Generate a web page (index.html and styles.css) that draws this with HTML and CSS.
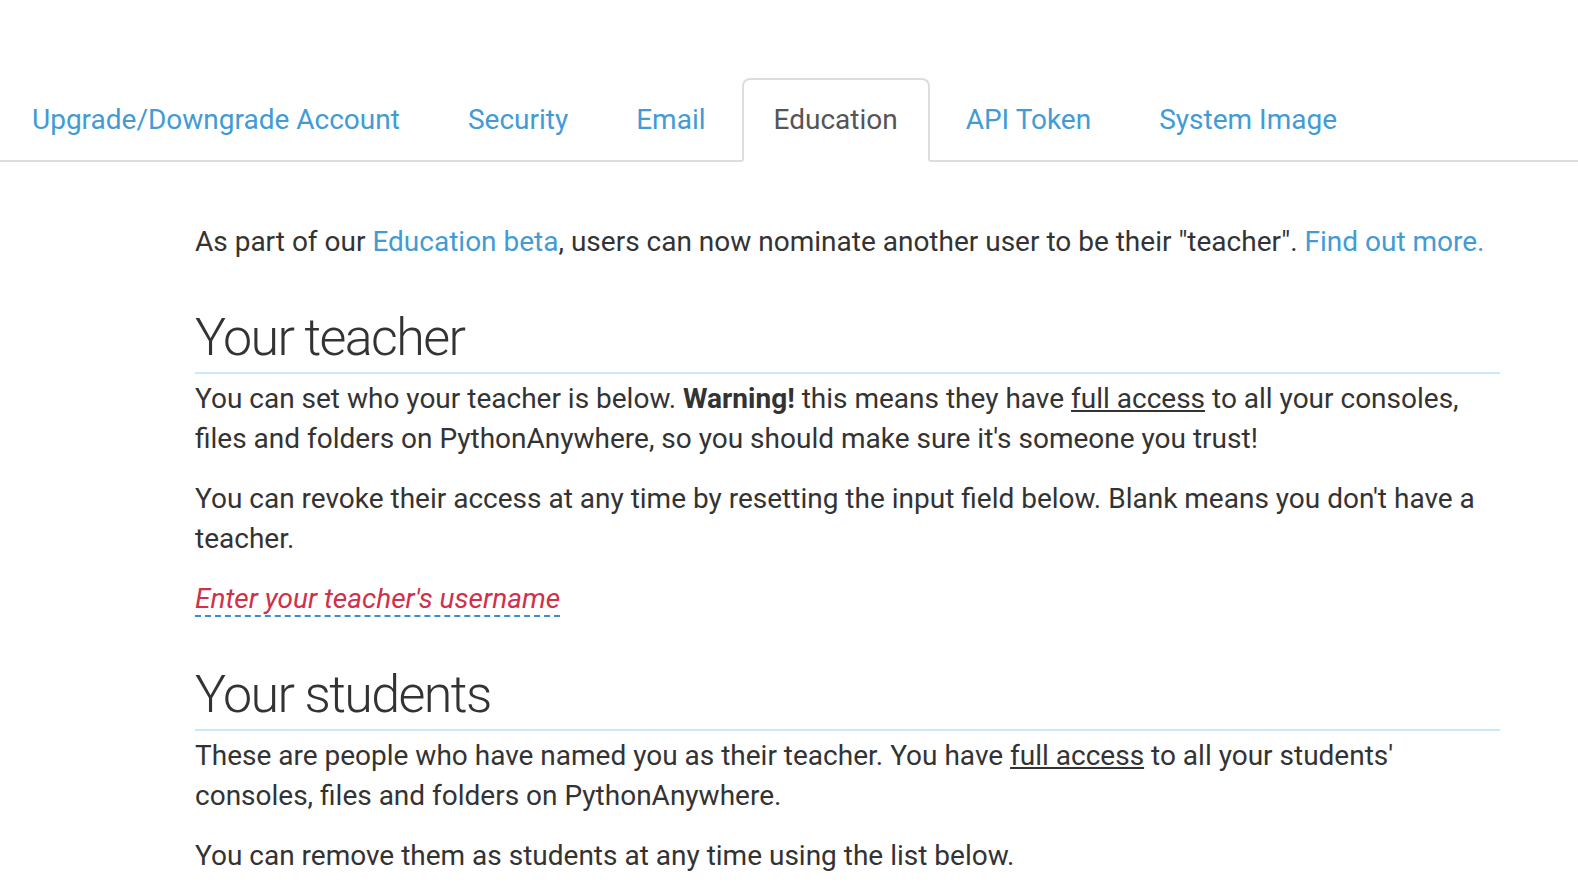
FILE: index.html
```html
<!DOCTYPE html>
<html lang="en">
<head>
<meta charset="utf-8">
<title>Account - Education</title>
<link rel="stylesheet" href="styles.css">
</head>
<body>
<ul class="tabs">
  <li class="tab"><a href="#">Upgrade/Downgrade Account</a></li>
  <li class="tab"><a href="#">Security</a></li>
  <li class="tab"><a href="#">Email</a></li>
  <li class="tab active"><a href="#">Education</a></li>
  <li class="tab"><a href="#">API Token</a></li>
  <li class="tab"><a href="#">System Image</a></li>
</ul>
<main class="content">
  <p class="intro">As part of our <a href="#" class="link">Education beta</a>, users can now nominate another user to be their "teacher". <a href="#" class="link">Find out more.</a></p>

  <h2 class="section-title">Your teacher</h2>
  <p>You can set who your teacher is below. <strong>Warning!</strong> this means they have <u>full access</u> to all your consoles, files and folders on PythonAnywhere, so you should make sure it's someone you trust!</p>
  <p>You can revoke their access at any time by resetting the input field below. Blank means you don't have a teacher.</p>
  <p class="teacher-field"><span class="editable">Enter your teacher's username</span></p>

  <h2 class="section-title">Your students</h2>
  <p>These are people who have named you as their teacher. You have <u>full access</u> to all your students' consoles, files and folders on PythonAnywhere.</p>
  <p>You can remove them as students at any time using the list below.</p>
</main>
</body>
</html>
```
FILE: styles.css
```css
html, body {
  margin: 0;
  padding: 0;
  background: #fff;
}
body {
  font-family: Roboto, "Helvetica Neue", Arial, sans-serif;
  font-size: 28px;
  line-height: 40px;
  color: #333;
}
a {
  text-decoration: none;
}
.tabs {
  list-style: none;
  margin: 78px 0 0;
  padding: 0;
  display: flex;
  border-bottom: 2px solid #ddd;
}
.tab {
  margin-right: 4px;
  margin-bottom: -2px;
}
.tab a {
  display: block;
  padding: 20px 30px;
  line-height: 40px;
  border: 2px solid transparent;
  border-radius: 8px 8px 0 0;
  color: #429bd5;
}
.tab.active a {
  color: #555;
  background: #fff;
  border-color: #ddd;
  border-bottom-color: #fff;
}
.content {
  margin: 0 78px 0 195px;
  padding-top: 60px;
}
p {
  margin: 0 0 20px;
}
.link {
  color: #429bd5;
}
.section-title {
  margin: 47px 0 5px;
  font-size: 52px;
  font-weight: 300;
  letter-spacing: -1.6px;
  line-height: 58px;
  padding-bottom: 5px;
  border-bottom: 2px solid #c9e9f9;
  color: #333;
}
.editable {
  color: #d0304a;
  font-style: italic;
  border-bottom: 2px dashed #3b8dd0;
}
```
